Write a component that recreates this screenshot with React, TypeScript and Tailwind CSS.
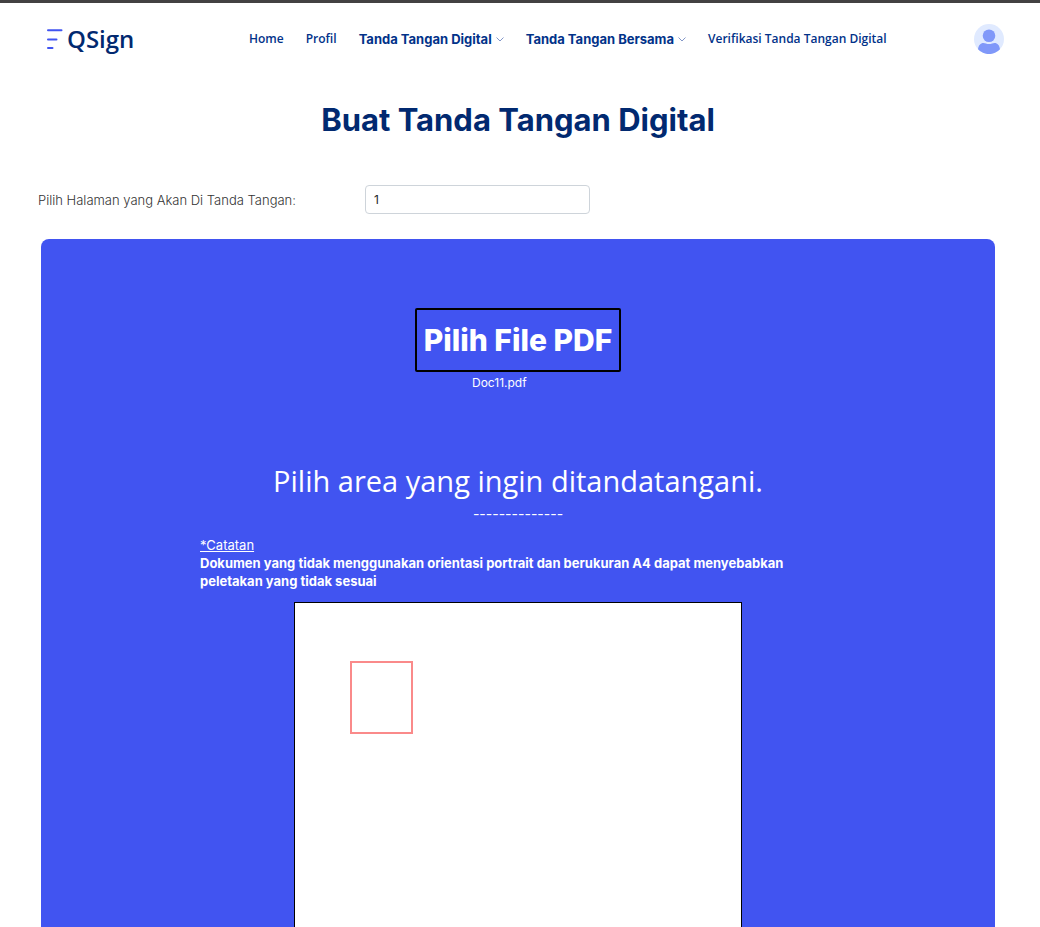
import { useState } from "react";
import type { ReactNode } from "react";

function Chevron() {
  return (
    <svg width="8" height="5" viewBox="0 0 8 5" fill="none" stroke="#8397c8" strokeLinecap="round" strokeLinejoin="round" aria-hidden="true">
      <path d="M0.8 0.8 L4 4 L7.2 0.8" />
    </svg>
  );
}

function NavLink({ children }: { children: ReactNode }) {
  return (
    <a href="#" className="font-['Open_Sans',sans-serif] text-[12px] leading-5 font-semibold whitespace-nowrap text-[#013289]">
      {children}
    </a>
  );
}

function NavMenu({ children }: { children: ReactNode }) {
  return (
    <button type="button" className="flex items-center gap-1 text-[13px] leading-5 font-bold whitespace-nowrap text-[#013289]">
      {children}
      <Chevron />
    </button>
  );
}

function Logo() {
  return (
    <a href="#" className="flex w-[203px] shrink-0 items-center gap-1">
      <svg width="17" height="21" viewBox="0 0 17 21" stroke="#4154f1" strokeWidth="2" strokeLinecap="round" aria-hidden="true">
        <path d="M2 1.2H15.5M2 10.5H10.5M2 19H6.5" />
      </svg>
      <span className="font-['Open_Sans',sans-serif] text-[24px] leading-7 font-semibold text-[#012970]">QSign</span>
    </a>
  );
}

function Avatar() {
  return (
    <button type="button" aria-label="Akun" className="ml-auto shrink-0">
      <svg width="30" height="30" viewBox="0 0 30 30" aria-hidden="true">
        <circle cx="15" cy="15" r="15" fill="#e0eaff" />
        <circle cx="15" cy="11.7" r="6.3" fill="#8098f9" />
        <path d="M4 25.3C4.4 21.4 6.6 19 9.4 19C11.2 19 12.5 20.1 15 20.1S18.8 19 20.6 19C23.4 19 25.6 21.4 26 25.3A15 15 0 0 1 4 25.3Z" fill="#8098f9" />
      </svg>
    </button>
  );
}

export default function App() {
  const [page, setPage] = useState("1");

  return (
    <div className="min-h-screen border-t-3 border-[#434142] bg-white font-[Inter,sans-serif]">
      <header className="flex h-18 items-center pr-9 pl-[46px]">
        <Logo />
        <nav className="flex items-center gap-[22px]">
          <NavLink>Home</NavLink>
          <NavLink>Profil</NavLink>
          <NavMenu>Tanda Tangan Digital</NavMenu>
          <NavMenu>Tanda Tangan Bersama</NavMenu>
          <NavLink>Verifikasi Tanda Tangan Digital</NavLink>
        </nav>
        <Avatar />
      </header>

      <main className="pt-[25px] pr-[45px] pl-[41px]">
        <h1 className="text-center text-[31px] leading-10 font-bold text-[#012970]">Buat Tanda Tangan Digital</h1>

        <div className="-ml-[3px] mt-[45px] flex items-center">
          <label htmlFor="page" className="w-[327px] text-[13px] leading-5 font-light text-[#333333]">
            Pilih Halaman yang Akan Di Tanda Tangan:
          </label>
          <input
            id="page"
            type="text"
            value={page}
            onChange={(event) => setPage(event.target.value)}
            className="h-[29px] w-[225px] rounded-sm border border-[#ced4da] px-2 text-[12px] text-[#212529]"
          />
        </div>

        <section className="mt-[25px] flex flex-col items-center rounded-t-lg bg-[#4154f1] pt-[69px] text-white">
          <button type="button" className="h-16 rounded-xs border-2 border-black px-[7px] text-[30px] font-extrabold whitespace-nowrap">
            Pilih File PDF
          </button>
          <p className="w-[92px] text-[12px] leading-[22px]">Doc11.pdf</p>

          <h2 className="mt-[67px] font-['Open_Sans',sans-serif] text-[29px] leading-10 font-normal">
            Pilih area yang ingin ditandatangani.
          </h2>
          <p className="mt-1 text-[14px] leading-[18px]">--------------</p>

          <div className="mt-[13px] w-[636px] max-w-full text-[13px] leading-[18px]">
            <p className="underline">*Catatan</p>
            <p className="max-w-[600px] font-bold">
              Dokumen yang tidak menggunakan orientasi portrait dan berukuran A4 dapat menyebabkan peletakan yang tidak sesuai
            </p>
          </div>

          <div className="relative mt-3 aspect-[210/297] w-[448px] border border-black bg-white">
            <div className="absolute top-[58px] left-[55px] h-[73px] w-[63px] border-2 border-[#fa8a8a]" />
          </div>
        </section>
      </main>
    </div>
  );
}
